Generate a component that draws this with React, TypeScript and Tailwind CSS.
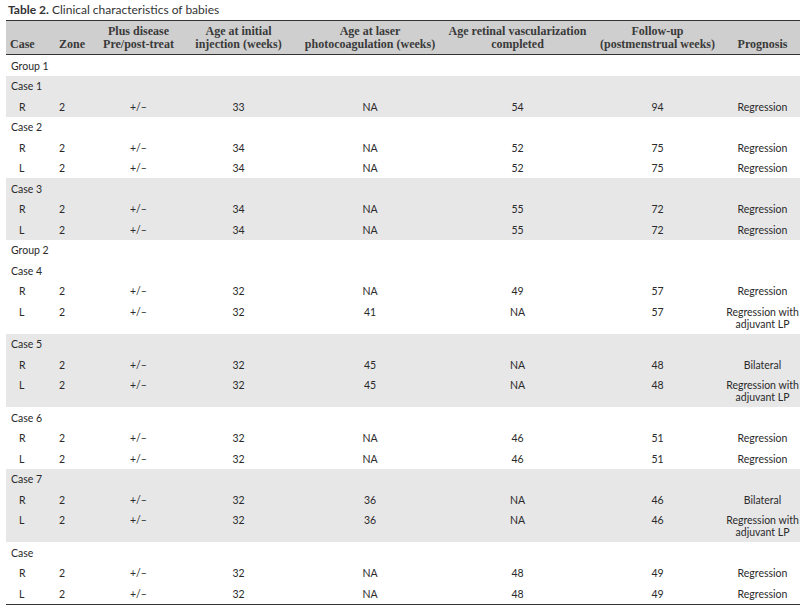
type Row =
  | { kind: "group"; label: string }
  | { kind: "case"; label: string }
  | { kind: "eye"; eye: string; laser: string; retinal: string; follow: string; inj: string; prognosis: string[] };

type Block = { shaded: boolean; rows: Row[] };

const eye = (e: string, inj: string, laser: string, retinal: string, follow: string, prognosis: string[]): Row => ({
  kind: "eye",
  eye: e,
  inj,
  laser,
  retinal,
  follow,
  prognosis,
});

const REG = ["Regression"];
const ADJ = ["Regression with", "adjuvant LP"];
const BIL = ["Bilateral"];

const blocks: Block[] = [
  { shaded: false, rows: [{ kind: "group", label: "Group 1" }] },
  { shaded: true, rows: [{ kind: "case", label: "Case 1" }, eye("R", "33", "NA", "54", "94", REG)] },
  {
    shaded: false,
    rows: [{ kind: "case", label: "Case 2" }, eye("R", "34", "NA", "52", "75", REG), eye("L", "34", "NA", "52", "75", REG)],
  },
  {
    shaded: true,
    rows: [{ kind: "case", label: "Case 3" }, eye("R", "34", "NA", "55", "72", REG), eye("L", "34", "NA", "55", "72", REG)],
  },
  { shaded: false, rows: [{ kind: "group", label: "Group 2" }] },
  {
    shaded: false,
    rows: [{ kind: "case", label: "Case 4" }, eye("R", "32", "NA", "49", "57", REG), eye("L", "32", "41", "NA", "57", ADJ)],
  },
  {
    shaded: true,
    rows: [{ kind: "case", label: "Case 5" }, eye("R", "32", "45", "NA", "48", BIL), eye("L", "32", "45", "NA", "48", ADJ)],
  },
  {
    shaded: false,
    rows: [{ kind: "case", label: "Case 6" }, eye("R", "32", "NA", "46", "51", REG), eye("L", "32", "NA", "46", "51", REG)],
  },
  {
    shaded: true,
    rows: [{ kind: "case", label: "Case 7" }, eye("R", "32", "36", "NA", "46", BIL), eye("L", "32", "36", "NA", "46", ADJ)],
  },
  {
    shaded: false,
    rows: [{ kind: "case", label: "Case" }, eye("R", "32", "NA", "48", "49", REG), eye("L", "32", "NA", "48", "49", REG)],
  },
];

const td = "align-top pt-[4.5px] pb-[4px] leading-[12px] whitespace-nowrap";
const th = "align-bottom pb-[3px] font-bold";

const App = () => {
  return (
    <div className="w-[806px] h-[612px] bg-white overflow-hidden text-[#2a2a2a] [font-family:Lato,'Liberation_Sans',sans-serif]">
      <p className="pl-[8px] pt-[3px] h-[20px] text-[12px] leading-[14px] text-[#333]">
        <span className="font-bold">Table 2.</span> Clinical characteristics of babies
      </p>
      <table className="ml-[6px] w-[794px] table-fixed border-collapse text-[10.5px]">
        <colgroup>
          <col className="w-[51px]" />
          <col className="w-[38px]" />
          <col className="w-[87px]" />
          <col className="w-[113px]" />
          <col className="w-[150px]" />
          <col className="w-[145px]" />
          <col className="w-[135px]" />
          <col className="w-[75px]" />
        </colgroup>
        <thead>
          <tr className="bg-[#cfcfcf] border-t border-b-[1.5px] border-[#333] h-[34px] text-[12px] leading-[13px] text-[#3a3a3a] [font-family:'Liberation_Serif',serif]">
            <th className={`${th} pl-[4px] text-left`}>Case</th>
            <th className={`${th} pl-[2px] text-left`}>Zone</th>
            <th className={`${th} text-center`}>
              Plus disease
              <br />
              Pre/post-treat
            </th>
            <th className={`${th} text-center`}>
              Age at initial
              <br />
              injection (weeks)
            </th>
            <th className={`${th} text-center`}>
              Age at laser
              <br />
              photocoagulation (weeks)
            </th>
            <th className={`${th} text-center`}>
              Age retinal vascularization
              <br />
              completed
            </th>
            <th className={`${th} text-center`}>
              Follow-up
              <br />
              (postmenstrual weeks)
            </th>
            <th className={`${th} text-center`}>Prognosis</th>
          </tr>
        </thead>
        {blocks.map((b, bi) => (
          <tbody key={bi} className={b.shaded ? "bg-[#e7e7e8]" : ""}>
            {b.rows.map((r, ri) =>
              r.kind === "eye" ? (
                <tr key={ri}>
                  <td className={`${td} pl-[13px]`}>{r.eye}</td>
                  <td className={`${td} pl-[2px]`}>2</td>
                  <td className={`${td} text-center`}>+/–</td>
                  <td className={`${td} text-center`}>{r.inj}</td>
                  <td className={`${td} text-center`}>{r.laser}</td>
                  <td className={`${td} text-center`}>{r.retinal}</td>
                  <td className={`${td} text-center`}>{r.follow}</td>
                  <td className={`${td} text-center`}>
                    {r.prognosis.map((p, pi) => (
                      <div key={pi}>{p}</div>
                    ))}
                  </td>
                </tr>
              ) : (
                <tr key={ri}>
                  <td colSpan={8} className={`${td} pl-[5px]`}>
                    {r.label}
                  </td>
                </tr>
              )
            )}
          </tbody>
        ))}
        <tfoot>
          <tr>
            <td colSpan={8} className="border-t border-[#333] h-[1px] p-0"></td>
          </tr>
        </tfoot>
      </table>
    </div>
  );
};

export default App;
